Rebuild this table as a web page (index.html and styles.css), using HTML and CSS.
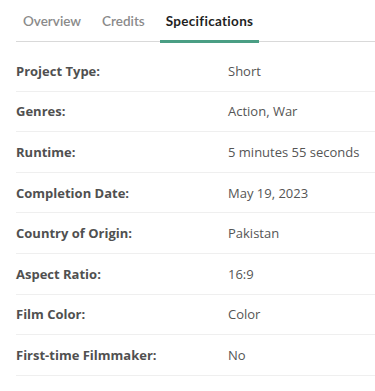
FILE: index.html
```html
<!DOCTYPE html>
<html lang="en">
<head>
    <meta charset="UTF-8">
    <meta name="viewport" content="width=device-width, initial-scale=1.0">
    <title>Specifications</title>
    <link rel="stylesheet" href="styles.css">
</head>
<body>
    <div class="specs-panel">
        <nav class="tabs">
            <a href="#" class="tab">Overview</a>
            <a href="#" class="tab">Credits</a>
            <a href="#" class="tab active">Specifications</a>
        </nav>

        <dl class="spec-list">
            <div class="spec-row">
                <dt>Project Type:</dt>
                <dd>Short</dd>
            </div>
            <div class="spec-row">
                <dt>Genres:</dt>
                <dd>Action, War</dd>
            </div>
            <div class="spec-row">
                <dt>Runtime:</dt>
                <dd>5 minutes 55 seconds</dd>
            </div>
            <div class="spec-row">
                <dt>Completion Date:</dt>
                <dd>May 19, 2023</dd>
            </div>
            <div class="spec-row">
                <dt>Country of Origin:</dt>
                <dd>Pakistan</dd>
            </div>
            <div class="spec-row">
                <dt>Aspect Ratio:</dt>
                <dd>16:9</dd>
            </div>
            <div class="spec-row">
                <dt>Film Color:</dt>
                <dd>Color</dd>
            </div>
            <div class="spec-row">
                <dt>First-time Filmmaker:</dt>
                <dd>No</dd>
            </div>
        </dl>
    </div>
</body>
</html>
```

FILE: styles.css
```css
/* Reset */
* {
    margin: 0;
    padding: 0;
    box-sizing: border-box;
}

body {
    background: #ffffff;
    font-family: 'Open Sans', Arial, sans-serif;
    color: #555555;
}

/* Panel wrapper */
.specs-panel {
    padding-left: 16px;
}

/* Tab bar */
.tabs {
    display: flex;
    gap: 21px;
    padding-left: 7px;
    height: 42px;
    border-bottom: 1px solid #d9d9d9;
}

.tab {
    font-family: 'Lato', 'Open Sans', sans-serif;
    font-size: 13.5px;
    font-weight: 600;
    color: #8a8a8a;
    text-decoration: none;
    padding-top: 13px;
    position: relative;
}

.tab.active {
    color: #1f1f1f;
    font-weight: 700;
    letter-spacing: 0.3px;
}

/* Green underline under the selected tab */
.tab.active::after {
    content: '';
    position: absolute;
    left: -6px;
    right: -6px;
    bottom: -2px;
    height: 3px;
    background: #4a9e84;
}

/* Specification rows */
.spec-list {
    margin-top: 9px;
}

.spec-row {
    display: flex;
    align-items: center;
    height: 40.6px;
    border-bottom: 1px solid #efefef;
    font-size: 13px;
}

.spec-row dt {
    width: 212px;
    font-weight: 700;
    color: #505050;
}

.spec-row dd {
    color: #555555;
}
```
